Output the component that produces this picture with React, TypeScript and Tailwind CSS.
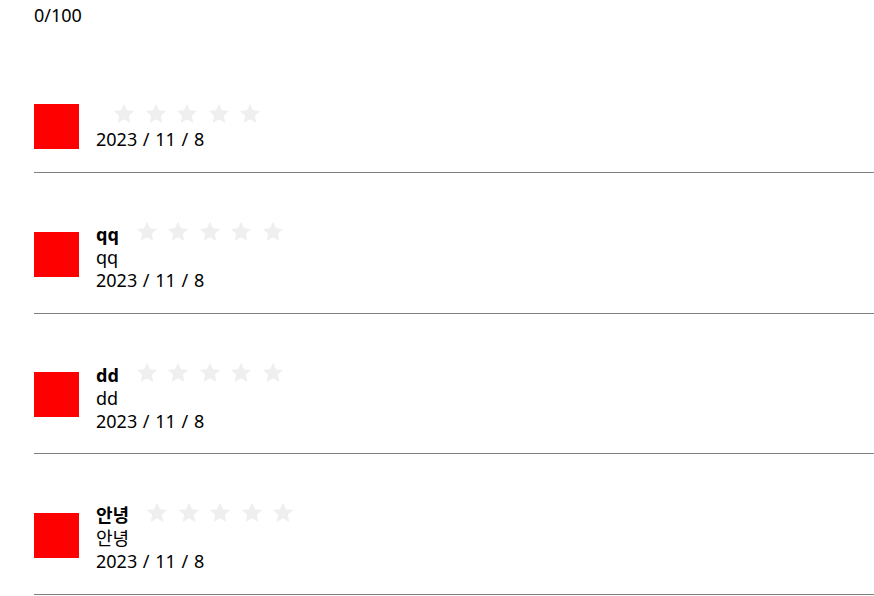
import React from "react";

const Star = () => (
  <svg width="22" height="21" viewBox="0 0 24 23" className="shrink-0">
    <path
      d="M12 0.8l3.3 7.1 7.8.9-5.8 5.3 1.6 7.7L12 17.9l-6.9 3.9 1.6-7.7L.9 8.8l7.8-.9z"
      fill="#efefef"
    />
  </svg>
);

const Stars = () => (
  <div className="mb-[6px] ml-[17px] flex items-center gap-[9.5px]">
    <Star />
    <Star />
    <Star />
    <Star />
    <Star />
  </div>
);

type Review = {
  name: string;
  body: string;
  date: string;
  row: string;
  box: string;
  text: string;
};

const reviews: Review[] = [
  { name: "", body: "", date: "2023 / 11 / 8", row: "pb-[21px]", box: "mt-[59px]", text: "mt-[60px]" },
  { name: "qq", body: "qq", date: "2023 / 11 / 8", row: "pb-[21px]", box: "mt-[59px]", text: "mt-[50px]" },
  { name: "dd", body: "dd", date: "2023 / 11 / 8", row: "pb-[20px]", box: "mt-[58px]", text: "mt-[50px]" },
  { name: "안녕", body: "안녕", date: "2023 / 11 / 8", row: "pb-[21px]", box: "mt-[59px]", text: "mt-[50px]" },
];

export default function App() {
  return (
    <div
      className="w-[874px] min-h-[596px] bg-white pl-[34px] text-[18px] leading-[23px] text-black [word-spacing:1px]"
      style={{ fontFamily: '"Noto Sans", "Noto Sans CJK KR", sans-serif' }}
    >
      <div className="h-[45px] pt-[4px]">0/100</div>
      {reviews.map((r, i) => (
        <div
          key={i}
          className={`flex items-start gap-[17px] border-b border-[#808080] ${r.row}`}
        >
          <div className={`h-[45px] w-[45px] shrink-0 bg-[#ff0000] ${r.box}`} />
          <div className={`flex flex-col ${r.text}`}>
            <div className="flex h-[23px] items-center">
              <span className="font-bold">{r.name}</span>
              <Stars />
            </div>
            {r.body && <div>{r.body}</div>}
            <div>{r.date}</div>
          </div>
        </div>
      ))}
    </div>
  );
}
